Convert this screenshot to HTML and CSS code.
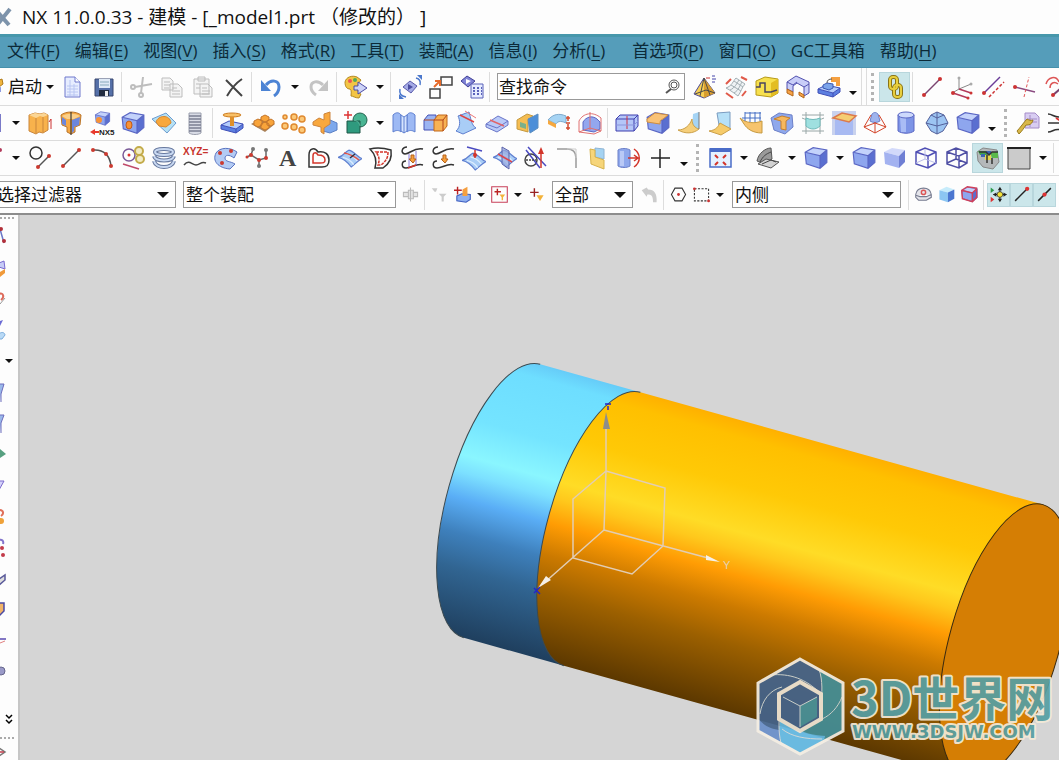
FILE: index.html
```
<!DOCTYPE html>
<html lang="zh-CN">
<head>
	<meta charset="UTF-8">
	<title>NX 11.0.0.33 - 建模</title>
	<link rel="stylesheet" href="styles.css">
</head>
<body>
	<!-- 公用图形 -->
	<svg class="defs" width="0" height="0">
		<symbol id="cube" viewBox="1 2 21 20">
			<path fill="#c3d2fb" d="M2 7 9 3l12 2-6 5z"/>
			<path fill="#8ea6ee" d="M2 7l13 3v11L3 17z"/>
			<path fill="#5a6fd0" d="M15 10l6-5v11l-6 5z"/>
			<path stroke="#5a66c4" d="M2 7 9 3l12 2v11l-6 5L3 17zl13 3v11M15 10l6-5"/>
		</symbol>
		<symbol id="slab" viewBox="0 0 24 24">
			<path fill="#b5cdfb" d="M1 14l8-4 14 3-7 5z"/>
			<path fill="#5c7fe0" d="M1 14l15 4v4L1 18zM16 18l7-5v4l-7 5z"/>
			<path stroke="#3f4fb8" d="M1 14l8-4 14 3v4l-7 5-15-4zl15 4v4M16 18l7-5"/>
		</symbol>
		<symbol id="sheet" viewBox="2 3 20 17">
			<path fill="#a9cdf6" stroke="#5f7fd0" d="M2 11c5-1 6-5 9-6 5 1 7 6 11 7-4 2-6 5-9 7-3-4-6-7-11-8z"/>
			<path stroke="#dfeeff" d="M6 11c4 1 7 3 9 6M9 8c4 1 7 3 9 6"/>
		</symbol>
		<symbol id="gear" viewBox="0 0 24 24">
			<path fill="#d9b84a" stroke="#9a7c1e" d="M5 19c3-3 7-9 10-12 2 1 4 2 6 1-1 5-5 5-7 5-2 3-4 6-7 9z"/>
		</symbol>
	</svg>

	<header class="title">
		<svg class="logoX" viewBox="0 0 12 20"><path stroke="#7d93ab" stroke-width="4" d="M-5 2 9 18M10 2-3 18"/></svg>
		<h1>NX 11.0.0.33 - 建模 - [_model1.prt （修改的） ]</h1>
	</header>

	<nav class="menu">
		<a href="#">文件(<u>F</u>)</a>
		<a href="#">编辑(<u>E</u>)</a>
		<a href="#">视图(<u>V</u>)</a>
		<a href="#">插入(<u>S</u>)</a>
		<a href="#">格式(<u>R</u>)</a>
		<a href="#">工具(<u>T</u>)</a>
		<a href="#">装配(<u>A</u>)</a>
		<a href="#">信息(<u>I</u>)</a>
		<a href="#" class="wide">分析(<u>L</u>)</a>
		<a href="#">首选项(<u>P</u>)</a>
		<a href="#">窗口(<u>O</u>)</a>
		<a href="#">GC工具箱</a>
		<a href="#">帮助(<u>H</u>)</a>
	</nav>

	<section class="bars">
		<!-- 标准 -->
		<div class="bar">
			<button class="start"><svg viewBox="0 0 6 24"><path fill="#f0b43c" stroke="#b07a18" d="M-3 6l5-2 1 5-4 3z"/><path fill="#8d9be0" d="M-3 13l4-1v5h-4z"/></svg><span>启动</span></button>
			<button class="tool" title="新建"><svg viewBox="0 0 24 24"><path fill="#e7edff" stroke="#6f78cc" d="M4 2h10l5 5v15H4z"/><path fill="#fff" stroke="#6f78cc" d="M14 2v5h5"/><path stroke="#b9c6f2" d="M6 11h11M6 14h11M6 17h11M6 20h11M9 5v16M13 9v12"/></svg></button>
			<button class="tool" title="保存"><svg viewBox="0 0 24 24"><path fill="#5570a8" stroke="#39466e" d="M3 4h18v17H3z"/><path fill="#dfeaf6" d="M7 4h11v9H7z"/><path stroke="#8ab" d="M8 7h9M8 10h9"/><path fill="#222c40" d="M7 15h10v6H7z"/><path fill="#eee" d="M13 16h3v5h-3z"/></svg></button>
			<i class="sep"></i>
			<button class="tool" title="剪切" disabled><svg viewBox="0 0 24 24"><g stroke="#bdbdbd" stroke-width="2"><circle cx="4" cy="12" r="2"/><circle cx="12" cy="20" r="2"/><path d="M6 12l17-3M12 18l2-16"/></g></svg></button>
			<button class="tool" title="复制" disabled><svg viewBox="0 0 24 24"><g fill="#f4f4f4" stroke="#bdbdbd"><path d="M2 3h8l3 3v9H2zM10 9h8l4 4v9H10z"/><path d="M4 7h6M4 10h6M4 13h5M12 13h5M12 16h8M12 19h8"/></g></svg></button>
			<button class="tool" title="粘贴" disabled><svg viewBox="0 0 24 24"><g fill="#f4f4f4" stroke="#bdbdbd"><path d="M3 4h15v15H3zM7 2h7v4H7zM9 9h8l4 4v9H9z"/><path d="M5 9h4M5 13h4M11 13h5M11 16h8M11 19h8"/></g></svg></button>
			<button class="tool" title="删除"><svg viewBox="0 0 24 24"><path stroke="#444" stroke-width="2" d="M4 5l16 16M20 4C14 8 9 14 5 21"/></svg></button>
			<i class="sep"></i>
			<button class="tool" title="撤销"><svg viewBox="0 0 24 24"><path stroke="#4c83d4" stroke-width="3" d="M7 10c5-6 13-5 13 2 0 4-2 7-5 9"/><path fill="#4c83d4" d="M2 5v11h10z"/></svg></button>
			<button class="drop" aria-label="撤销列表"></button>
			<button class="tool" title="重做" disabled><svg viewBox="0 0 24 24"><path stroke="#c4c4c4" stroke-width="3" d="M16 10C11 5 4 6 4 12c0 4 2 6 5 8"/><path fill="#c4c4c4" d="M21 5v11H11z"/></svg></button>
			<i class="sep"></i>
			<button class="tool" title="命令查找器"><svg viewBox="0 0 24 24"><path fill="#f3c545" stroke="#b58a22" d="M1 7C2 2 8 0 13 2l4 3-3 4 1 5c-2 2-1 4 2 5l-2 4c-4 0-6-2-8-2 0-3 1-5-1-7-3 0-5-2-5-7z"/><circle fill="#e55" cx="6" cy="6" r="2"/><circle fill="#5a5" cx="11" cy="5" r="2"/><path fill="#cdd3f7" stroke="#4c4ca4" d="M10 11h4V7l9 6-9 6v-4h-4z"/></svg></button>
			<button class="drop" aria-label="更多命令"></button>
			<i class="sep"></i>
			<button class="tool" title="旋转"><svg viewBox="0 0 24 24"><path fill="#a5abe6" stroke="#5a5cac" d="M5 12l7-6 7 5-6 7z"/><path fill="#4a4ca0" d="M10 9l5 3-5 3z"/><path stroke="#4b78cc" stroke-width="1.5" d="M2 14c-1 5 1 7 6 8M22 10c1-4 0-6-4-7"/><path fill="#4b78cc" d="M19 0h5v5zM1 24v-5l5 5z"/></svg></button>
			<button class="tool" title="移动"><svg viewBox="0 0 24 24"><path stroke="#444" stroke-width="1.5" d="M12 2h11v8H12zM1 14h10v9H1z"/><path stroke="#e66a2a" stroke-width="2" d="M5 12l5-5M6 6h5v5"/></svg></button>
			<button class="tool" title="对话框"><svg viewBox="0 0 24 24"><path fill="#8084d6" stroke="#3f3f96" d="M1 6l6-5 8 5-7 6z"/><path fill="#fff" d="M6 4l5 2-5 3z"/><path fill="#e6ecff" stroke="#5a62ba" d="M11 9h12v14H11z"/><path stroke="#5a62ba" stroke-width="2" stroke-dasharray="2 2" d="M13 13h9M13 16h9M13 19h9"/></svg></button>
			<i class="sep"></i>
			<label class="search">
				<input type="text" value="查找命令" aria-label="查找命令">
				<svg viewBox="0 0 16 16"><circle cx="10" cy="6" r="5"/><circle cx="10" cy="6" r="3"/><path stroke-width="2" d="M7 10l-5 4"/></svg>
			</label>
			<button class="tool" title="基准"><svg viewBox="0 0 24 24"><path fill="#f6cf55" stroke="#4b4b9b" d="M11 3 1 19l10 4 11-5z"/><path fill="#d89e30" d="M11 3v20l11-5z"/><path stroke="#4b4b4b" d="M11 3l-4 18M11 3l6 17M2 19l11-4 9 3"/><path stroke="#c33" d="M13 3h4"/><path stroke="#44a" d="M19 1h3M19 4h4M19 7h3"/></svg></button>
			<button class="tool" title="曲面网格"><svg viewBox="0 0 24 24"><path fill="#eef2f4" stroke="#a3afb4" d="M2 13C8 11 9 6 12 3l9 6c-3 3-4 8-7 12-4-3-8-6-12-8z"/><path stroke="#a3afb4" d="M6 15c5-2 7-7 9-10M10 18c5-3 6-8 8-11M7 10l10 6M10 6l9 6"/><path stroke="#e05a4a" stroke-width="2" d="M2 9l5-5M17 2l6 3M2 18l7 5M18 21l4-5"/></svg></button>
			<button class="tool" title="截面"><svg viewBox="0 0 24 24"><path fill="#f7e04e" stroke="#b79a18" d="M1 6l9-4 13 2v14l-7 4-15-2z"/><path fill="#e3bd22" d="M16 8l7-4v14l-7 4z"/><path stroke="#4a4460" stroke-width="1.5" d="M1 12h4V8h5v9h6l6-2"/></svg></button>
			<button class="tool" title="管道"><svg viewBox="0 0 24 24"><path fill="#c9cef8" stroke="#5252b0" d="M1 14V7l9-6 13 6v11l-5 3v-9l-7-4-4 3v6z"/><path stroke="#5252b0" d="M1 7l6 3 4-3M18 12l5-3"/><path fill="#f7a346" stroke="#b3661a" d="M1 14l6 3v4l-6-3zM13 17l5 3v3l-5-3z"/></svg></button>
			<button class="tool" title="装配"><svg viewBox="0 0 24 24"><use href="#slab"/><path fill="#7ba4ea" stroke="#3a58b4" d="M6 10l4-2 6 1v4l-4 2-6-2z"/><path fill="#f5a040" d="M14 2h9v9h-4V7h-5z"/><path stroke="#555" d="M10 8c0-3 2-4 5-4"/></svg></button>
			<button class="drop low" aria-label="工具栏选项"></button>
			<i class="edge"></i>
			<i class="grip"></i>
			<button class="tool on" title="链接"><svg viewBox="0 0 24 24"><g stroke="#8a7416" stroke-width="4"><rect x="7" y="2" width="7" height="12" rx="3"/><rect x="11" y="10" width="7" height="12" rx="3"/></g><g stroke="#e8cf3e" stroke-width="2"><rect x="7" y="2" width="7" height="12" rx="3"/><rect x="11" y="10" width="7" height="12" rx="3"/></g></svg></button>
			<i class="sep"></i>
			<button class="tool" title="直线"><svg viewBox="0 0 24 24"><path stroke="#7a4470" stroke-width="1.5" d="M4 20 20 4"/><circle fill="#c33" cx="4" cy="20" r="2"/><circle fill="#c33" cx="20" cy="4" r="2"/></svg></button>
			<button class="tool" title="坐标"><svg viewBox="0 0 24 24"><path stroke="#888" d="M8 14V3M8 14l12-5M8 14l-5 3"/><circle fill="#aaa" cx="8" cy="3" r="1.5"/><circle fill="#aaa" cx="20" cy="9" r="1.5"/><path stroke="#b23a5a" stroke-width="1.5" d="M2 18l15 5M8 14l12 4"/><g fill="#c33"><circle cx="2" cy="18" r="2"/><circle cx="17" cy="23" r="1.5"/><circle cx="20" cy="18" r="1.5"/></g></svg></button>
			<button class="tool" title="平行"><svg viewBox="0 0 24 24"><path stroke="#6a3c98" stroke-width="1.5" d="M2 18 18 2"/><path stroke="#c33" stroke-width="1.5" stroke-dasharray="3 2" d="M7 22 22 7"/><circle fill="#c33" cx="2" cy="18" r="2"/></svg></button>
			<button class="tool" title="垂直"><svg viewBox="0 0 24 24"><path stroke="#8a4a80" stroke-width="1.5" d="M2 12l20 5"/><path stroke="#e05555" stroke-dasharray="3 2" d="M11 22l5-20"/><circle fill="#c33" cx="2" cy="12" r="2"/></svg></button>
			<button class="tool" title="相切"><svg viewBox="0 0 24 24"><path stroke="#d55" stroke-width="1.5" d="M2 9c2-7 10-9 13-2M6 13c0-5 4-7 8-4"/><path stroke="#7a4470" stroke-width="2" d="M9 20l7-6"/><circle fill="#c33" cx="9" cy="20" r="2"/></svg></button>
		</div>

		<!-- 特征 -->
		<div class="bar">
			<button class="cut" title="草图"><svg viewBox="0 0 7 24"><path fill="#7a7ac8" d="M0 3h1v18H0z"/></svg></button>
			<button class="drop" aria-label="草图列表"></button>
			<button class="tool" title="拉伸"><svg viewBox="0 0 24 24"><path fill="#f8b24c" stroke="#c9863c" d="M1 4l6-2 5 1 4-1 4 2v15l-5 3-4-1-3 2-7-3z"/><path fill="#fbd695" d="M1 4l6-2 5 1 4-1 4 2-5 2-3-1-4 2z"/><path stroke="#c9863c" d="M8 7v15M15 6v15"/><path stroke="#c33" d="M23 18V8M21 11l2-3"/></svg></button>
			<button class="tool" title="旋转特征"><svg viewBox="0 0 24 24"><path fill="#f6a944" stroke="#b9742a" d="M2 4c5-4 15-4 20 0l-1 10-5 2v5l-4 2-4-2v-5l-5-2z"/><path fill="#fbd08a" d="M3 5c5-3 13-3 18 0l-6 3H8z"/><path fill="#6b86dc" d="M13 9l8-3-1 8-5 2v4l-2 2zM3 6l4 3v6l-4-2z"/><path stroke="#222" d="M12 1v23"/></svg></button>
			<button class="tool" title="NX5 成形"><svg viewBox="0 0 24 24"><use href="#cube" x="4" y="0" width="17" height="15"/><circle fill="#f79236" cx="9" cy="9" r="3"/><path stroke="#e8392c" stroke-width="2" d="M3 21h6"/><path fill="#e8392c" d="M5 18v6l-5-3z"/><text x="9" y="24" class="mini">NX5</text></svg></button>
			<button class="tool" title="孔"><svg viewBox="0 0 24 24"><use href="#cube"/><ellipse fill="#f79236" stroke="#c35a16" cx="8" cy="14" rx="3" ry="4"/></svg></button>
			<button class="tool" title="凸台"><svg viewBox="0 0 24 24"><path fill="#b6e1f4" stroke="#6c9cd0" d="M0 8l14-6 10 10-9 10z"/><path fill="#f8a83c" stroke="#d9862c" d="M4 11c2-7 14-8 15 1l-5 4-7-1z"/></svg></button>
			<button class="tool" title="螺纹"><svg viewBox="0 0 24 24"><path fill="#d9dce6" stroke="#9a9eac" d="M6 2h12v20c-3 2-9 2-12 0z"/><path stroke="#7b7f92" stroke-width="1.5" d="M6 5h12M6 8h12M6 11h12M6 14h12M6 17h12M6 20h12"/></svg></button>
			<i class="sep"></i>
			<button class="tool" title="拔模"><svg viewBox="0 0 24 24"><use href="#slab"/><ellipse fill="#f9c066" stroke="#cd7c22" cx="12" cy="4" rx="9" ry="2"/><path stroke="#e0902a" stroke-width="4" d="M12 6v9"/></svg></button>
			<button class="tool" title="阵列特征"><svg viewBox="0 0 24 24"><path fill="#a8845e" d="M0 13l11-6 13 6-10 8z"/><g fill="#f8a43a" stroke="#c5762a"><path d="M3 10l4-2 4 2v4l-4 2-4-2zM10 13l4-2 4 2v4l-4 2-4-2zM10 6l4-2 4 2v3l-4 2-4-2zM16 10l4-2 3 2v3l-3 2-4-1z"/></g></svg></button>
			<button class="tool" title="阵列几何"><svg viewBox="0 0 24 24"><g fill="#fbc878" stroke="#e08a30" stroke-width="1.5"><circle cx="3" cy="6" r="2"/><circle cx="12" cy="6" r="3"/><circle cx="20" cy="8" r="3"/><circle cx="3" cy="15" r="3"/><circle cx="12" cy="16" r="3"/><circle cx="20" cy="19" r="3"/></g></svg></button>
			<button class="tool" title="镜像"><svg viewBox="0 0 24 24"><path fill="#7da8ec" stroke="#5a7fc4" d="M10 12l7-3 7 3v7l-7 3-7-2z"/><path fill="#f8a83e" stroke="#cd843c" d="M0 11l6-4 5 2V3l6-2v12l-6 4v6l-3-2v-5l-8-2z"/></svg></button>
			<button class="tool" title="合并"><svg viewBox="0 0 24 24"><circle fill="#4ab593" stroke="#23624f" cx="16" cy="9" r="7"/><path fill="#2f9a7e" stroke="#1f5647" d="M3 10h13v12H3z"/><path stroke="#5dbb9f" d="M10 10c1-2 6 2 6 5"/><path stroke="#d33" stroke-width="1.5" d="M4 0v8M0 4h8"/></svg></button>
			<button class="drop" aria-label="布尔列表"></button>
			<button class="tool" title="桥接"><svg viewBox="0 0 24 24"><path fill="#9db9f4" stroke="#6080d0" d="M1 4c3-3 6-3 8 0v17c-2-2-5-2-8 0zM15 4c2-3 5-3 8 0v17c-3-2-6-2-8 0z"/><path fill="#d5e4ff" stroke="#6080d0" d="M9 4l3 2 3-2v16l-3 2-3-2zM12 6v16"/></svg></button>
			<button class="tool" title="替换面"><svg viewBox="0 0 24 24"><path fill="#9bb4f2" stroke="#4450b4" d="M1 9l4-5h8v15H1z"/><path fill="#f8b254" stroke="#c2681a" d="M11 9l4-5h9v11l-4 5h-9z"/><path stroke="#b3451a" d="M1 9h19v11M20 9l4-5"/></svg></button>
			<button class="tool" title="修剪体"><svg viewBox="0 0 24 24"><path fill="#a9cdf6" stroke="#5f7fd0" d="M2 20c5-4 4-11 2-15l11-4c2 6 2 13 7 16L9 23z"/><path stroke="#d44" stroke-width="1.5" d="M6 4l14 7"/><path stroke="#e77" d="M11 0l11 7"/></svg></button>
			<button class="tool" title="拆分体"><svg viewBox="0 0 24 24"><path fill="#b9caf8" stroke="#6a75c8" d="M1 13l12-8 10 5v4l-11 7-11-5z"/><path stroke="#6a75c8" d="M1 13l11 4 11-7"/><path stroke="#e0656a" stroke-width="1.5" d="M5 9l14 6"/></svg></button>
			<button class="tool" title="抽壳"><svg viewBox="0 0 24 24"><path fill="#f5bd52" stroke="#c59a40" d="M1 9l10-6 6 2-5 4v12L1 18z"/><path fill="#4d8fd8" stroke="#5c8ec0" d="M12 8l10-5v14l-8 5z"/><path fill="#7ab08a" d="M4 11l6 2v5l-6-2z"/></svg></button>
			<button class="tool" title="加厚"><svg viewBox="0 0 24 24"><path fill="#a6d4f4" stroke="#7faacc" d="M1 9c5-6 11-7 18-4v7c-6-3-9-1-10 1z"/><path fill="#f6a83e" d="M1 9l8 4v4l-8-4z"/><path stroke="#d44a2c" stroke-width="1.5" d="M21 5v5M21 13v6M19 7h4M19 12h4M19 17h4"/></svg></button>
			<button class="tool" title="偏置"><svg viewBox="0 0 24 24"><path fill="#93a7ee" stroke="#5c68c4" d="M5 11c3-5 9-7 14-3l3 3v7l-6 3-11-2z"/><path stroke="#e07070" d="M1 10c4-8 14-10 22-3v13l-7 3-15-2zM12 1v18M1 21l11-4 11 3"/></svg></button>
			<i class="sep"></i>
			<button class="tool" title="块"><svg viewBox="0 0 24 24"><path fill="#b4c6f8" stroke="#3f3fae" d="M1 8l4-4h18v11l-4 5H1zM1 8h18v12M19 8l4-4"/><path stroke="#c34" d="M12 5v13"/><path stroke="#8a94dd" d="M1 14h18l4-4"/></svg></button>
			<button class="tool" title="边倒圆"><svg viewBox="0 0 24 24"><use href="#cube"/><path fill="#f9c276" stroke="#cf8e3e" d="M1 8 9 2l13 2-5 4c-3 1-3 3-3 5L1 11z"/></svg></button>
			<button class="tool" title="直纹"><svg viewBox="0 0 24 24"><path fill="#a5d4f5" d="M16 3l6-2v17l-7 2z"/><path fill="#f6cf7a" stroke="#cba04a" d="M1 19c7 0 12-5 14-11 0 6 3 9 7 10-6 5-14 5-21 1z"/><path stroke="#777" d="M22 1v17"/></svg></button>
			<button class="tool" title="扫掠"><svg viewBox="0 0 24 24"><path fill="#b6e0f7" stroke="#7a9cc0" d="M9 2l13-1v17l-11-4z"/><path fill="#f6cb6a" stroke="#cba04a" d="M1 20c8-1 9-5 11-8l11 6-10 6z"/></svg></button>
			<button class="tool" title="延伸"><svg viewBox="0 0 24 24"><path fill="#f7c46e" stroke="#c59a40" d="M1 7c6 5 14 6 22 3v12c-9 0-15-4-18-9z"/><path stroke="#456fc4" d="M3 7h19M6 1v9M11 1v10M16 1v10M21 1v9M6 2h16"/></svg></button>
			<button class="tool" title="规律延伸"><svg viewBox="0 0 24 24"><path fill="#8fa8ec" stroke="#6c80c8" d="M1 7l8-5 13 2 1 12-8 7-11-4z"/><path fill="#f6b85e" stroke="#c5802c" d="M4 8l8-3 8 2-4 3v9l-5-1v-8z"/></svg></button>
			<button class="tool" title="通过曲线网格"><svg viewBox="0 0 24 24"><path stroke="#98a6a6" d="M1 4h22M1 20h22M1 7c6 3 16 3 22 0M5 1v22M19 1v22"/><path fill="#9fe0e0" stroke="#6fbaba" d="M5 7c5 2 9 2 14 0v8c-4 4-10 4-14 0z"/></svg></button>
			<button class="tool" title="N 边曲面"><svg viewBox="0 0 24 24"><path fill="#c9d2ee" d="M0 0h24v24H0z"/><path fill="#a8baf2" d="M3 9h18v15H3z"/><path fill="#f5cd72" stroke="#dc7a4c" stroke-width="1.5" d="M1 7l9-5 14 3-7 6z"/></svg></button>
			<button class="tool" title="圆锥"><svg viewBox="0 0 24 24"><path fill="#9fb4ee" stroke="#6c80c8" d="M7 10l2-7c2-2 4-2 6 0l2 7c-3 2-7 2-10 0z"/><path stroke="#d3452a" stroke-width="1" d="M8 4 1 16l11 6 11-6-7-12M12 11v11M1 16l11-4 11 4"/></svg></button>
			<button class="tool" title="圆柱"><svg viewBox="0 0 24 24"><path fill="#7d94e6" stroke="#5c68c4" d="M4 4v16c4 3 12 3 16 0V4z"/><path fill="#a9bcf5" d="M6 6h6v15H7z"/><ellipse fill="#cdd9fc" stroke="#5c68c4" cx="12" cy="4" rx="8" ry="3"/></svg></button>
			<button class="tool" title="球"><svg viewBox="0 0 24 24"><path fill="#9cc4f2" stroke="#54609a" d="M1 12 6 4l6-3 7 3 4 8-5 8-6 3-6-3z"/><path stroke="#54609a" d="M1 12l11 3 11-3M12 1v22M6 4l6 3 7-3"/></svg></button>
			<button class="tool" title="长方体"><svg viewBox="0 0 24 24"><use href="#cube"/></svg></button>
			<button class="drop low" aria-label="工具栏选项"></button>
			<i class="grip"></i>
			<button class="tool" title="定制"><svg viewBox="0 0 24 24"><path fill="#d8cdf2" stroke="#a58cc8" d="M9 2h10l4 4v11H9z"/><path stroke="#a58cc8" d="M11 8h10M11 11h10M14 4v12"/><use href="#gear" x="-4" y="1"/></svg></button>
			<button class="tool" title="曲线"><svg viewBox="0 0 24 24"><path stroke="#333" stroke-width="1.5" d="M1 3c5 0 6 4 13 3M1 12h13M1 21c5 0 6-4 13-2"/><path stroke="#d33" stroke-width="2" d="M9 7l5 3"/></svg></button>
		</div>

		<!-- 曲线 -->
		<div class="bar">
			<button class="cut" title="点"><svg viewBox="0 0 7 24"><circle fill="#b23a5a" cx="0" cy="4" r="2"/></svg></button>
			<button class="drop" aria-label="点列表"></button>
			<button class="tool" title="直线和圆弧"><svg viewBox="0 0 24 24"><circle stroke="#333" stroke-width="1.5" cx="8" cy="7" r="6"/><path stroke="#555" stroke-width="1.5" d="M10 21 21 10"/><circle fill="#cc3a30" cx="10" cy="21" r="2"/><circle fill="#cc3a30" cx="21" cy="10" r="2"/></svg></button>
			<button class="tool" title="直线"><svg viewBox="0 0 24 24"><path stroke="#555" stroke-width="1.5" d="M4 20 20 4"/><circle fill="#cc3a30" cx="4" cy="20" r="2"/><circle fill="#cc3a30" cx="20" cy="4" r="2"/></svg></button>
			<button class="tool" title="圆弧"><svg viewBox="0 0 24 24"><path stroke="#555" stroke-width="1.5" d="M3 4c11-1 17 6 18 16"/><circle fill="#cc3a30" cx="3" cy="4" r="2"/><circle fill="#cc3a30" cx="16" cy="8" r="2"/><circle fill="#cc3a30" cx="21" cy="20" r="2"/></svg></button>
			<button class="tool" title="基本曲线"><svg viewBox="0 0 24 24"><circle stroke="#7a5a98" stroke-width="1.5" cx="8" cy="9" r="6"/><circle fill="#d33" cx="8" cy="9" r="1.5"/><g fill="#f3ecc4" stroke="#c3ab4a" stroke-width="2"><circle cx="18" cy="5" r="4"/><circle cx="19" cy="13" r="4"/></g><path stroke="#c04a6a" stroke-width="1.5" d="M2 18l16 5"/></svg></button>
			<button class="tool" title="螺旋线"><svg viewBox="0 0 24 24"><g stroke="#66789e" stroke-width="4"><ellipse cx="12" cy="6" rx="9" ry="3"/><path d="M2 10c2 6 18 6 20 0M2 15c2 8 18 8 20 0"/></g><g stroke="#c9d9f2" stroke-width="2"><ellipse cx="12" cy="6" rx="9" ry="3"/><path d="M2 10c2 6 18 6 20 0M2 15c2 8 18 8 20 0"/></g></svg></button>
			<button class="tool" title="规律曲线"><svg viewBox="0 0 24 24"><text x="0" y="9" class="mini red">XYZ=</text><path stroke="#444" stroke-width="1.5" d="M1 19c5-6 8 0 12 0s5-4 10-2"/></svg></button>
			<button class="tool" title="艺术样条"><svg viewBox="0 0 24 24"><path fill="#b3cbf4" stroke="#5a74c0" d="M2 7c4-6 14-6 21-1l-3 6c-5-4-9-3-9 0 0 4 5 3 10 6l-5 5C4 22-2 15 2 7z"/><g fill="#cc3a30"><circle cx="6" cy="7" r="2"/><circle cx="17" cy="5" r="2"/><circle cx="8" cy="17" r="2"/></g></svg></button>
			<button class="tool" title="拟合样条"><svg viewBox="0 0 24 24"><path stroke="#666" stroke-width="1.5" d="M8 3 6 9l8 5 7-2V4M6 9l-4 2M14 14v6"/><g fill="#777"><circle cx="8" cy="3" r="2"/><circle cx="21" cy="4" r="2"/><circle cx="14" cy="20" r="2"/></g><g fill="#cc3a30"><circle cx="6" cy="9" r="2"/><circle cx="14" cy="14" r="2"/><circle cx="21" cy="12" r="2"/><circle cx="2" cy="11" r="1.5"/></g></svg></button>
			<button class="tool" title="文本"><svg viewBox="0 0 24 24"><text x="3" y="20" class="letter">A</text></svg></button>
			<button class="tool" title="偏置曲线"><svg viewBox="0 0 24 24"><path stroke="#333" stroke-width="1.5" d="M2 21V9C2 2 8 1 11 6c7-1 11 2 11 8s-3 7-7 7z"/><path stroke="#d3352a" stroke-width="1.5" d="M6 17v-7c0-4 3-4 5-1 4 0 7 1 7 5 0 3-2 3-5 3z"/></svg></button>
			<button class="tool" title="面上偏置"><svg viewBox="0 0 24 24"><use href="#sheet"/><path stroke="#e0554a" stroke-width="1.5" d="M6 7c6 1 11 4 15 7"/><path stroke="#334" stroke-width="1.5" d="M12 12l5-4"/></svg></button>
			<button class="tool" title="缠绕曲线"><svg viewBox="0 0 24 24"><path stroke="#333" stroke-width="1.5" d="M1 3c8-2 14-1 21 1 1 8-1 13-8 18H6C8 15 6 8 1 3z"/><path stroke="#d3352a" stroke-width="1.5" stroke-dasharray="3 1" d="M7 6h12c0 6-2 9-7 13H9c2-5 1-9-2-13z"/></svg></button>
			<button class="tool" title="组合投影"><svg viewBox="0 0 24 24"><path stroke="#333" stroke-width="1.5" d="M7 1C2 1 0 7 5 8c5 0 9-7 18-5M6 15c-5 0-5 7 0 7 6 0 10-5 17-3"/><path stroke="#8a7ad8" d="M9 8v13M16 5v14"/><path fill="#f7a03a" stroke="#b5601a" d="M11 9h3v4h2l-3 4-4-4h2z"/><path stroke="#d3352a" stroke-width="1.5" d="M8 22l8-3"/></svg></button>
			<button class="tool" title="投影曲线"><svg viewBox="0 0 24 24"><path stroke="#333" stroke-width="1.5" d="M7 1C2 1 0 7 5 8c5 0 9-7 18-5M6 15c-5 0-5 7 0 7 6 0 10-5 17-3"/><path fill="#f7a03a" stroke="#b5601a" d="M12 9h3v4h2l-3 4-4-4h2z"/></svg></button>
			<button class="tool" title="投影到面"><svg viewBox="0 0 24 24"><use href="#sheet" y="3"/><path stroke="#4a4ac0" stroke-width="1.5" d="M5 1l15 4"/><path stroke="#d3352a" stroke-width="1.5" d="M13 4v8"/><circle fill="#d3352a" cx="13" cy="9" r="2"/></svg></button>
			<button class="tool" title="相交曲线"><svg viewBox="0 0 24 24"><use href="#sheet"/><path fill="#9aaade" fill-opacity=".7" stroke="#5a62aa" d="M9 1l7 4v18l-7-5z"/><path stroke="#e0454a" stroke-width="1.5" d="M5 8l14 8"/></svg></button>
			<button class="tool" title="截面曲线"><svg viewBox="0 0 24 24"><circle stroke="#444" stroke-width="1.5" cx="7" cy="14" r="6"/><path stroke="#4a4ac0" stroke-width="1.5" d="M4 1l18 19M2 4l14 18"/><path stroke="#444" stroke-width="1.5" stroke-dasharray="2 1" d="M2 14h10"/><path stroke="#d3352a" stroke-width="1.5" d="M17 22V5"/><path fill="#d3352a" d="M14 8l3-7 3 7z"/></svg></button>
			<button class="tool" title="圆形圆角曲线"><svg viewBox="0 0 24 24"><path stroke="#999" stroke-width="1.5" d="M2 3h10c6 0 9 3 9 9v10"/><path stroke="#ccc" d="M12 3h9v9"/></svg></button>
			<button class="tool" title="抽取曲线"><svg viewBox="0 0 24 24"><path fill="#a5d3f2" stroke="#8eb4d4" d="M9 2l9 1v10l-9-2z"/><path fill="#f6d57a" stroke="#d7b24c" d="M4 3l5 1v7l9 3v9L5 18z"/></svg></button>
			<button class="tool" title="移动曲线"><svg viewBox="0 0 24 24"><path fill="#8fa8ec" stroke="#6c80c8" d="M1 4c3-2 9-2 12 0v16c-3 2-9 2-12 0z"/><path fill="#b9c9f6" d="M3 5h4v15H3z"/><path stroke="#d3352a" stroke-width="1.5" d="M17 3c7 5 7 13 0 18M11 12h9M17 9l4 3-4 3"/></svg></button>
			<button class="tool" title="点集"><svg viewBox="0 0 24 24"><path stroke="#222" stroke-width="1.5" d="M12 3v19M3 12h19"/></svg></button>
			<button class="drop low" aria-label="工具栏选项"></button>
			<i class="grip"></i>
			<button class="tool" title="适合窗口"><svg viewBox="0 0 24 24"><path fill="#e6f2ff" stroke="#4a6cc8" stroke-width="1.5" d="M2 3h21v18H2z"/><path fill="#4a6cc8" d="M2 2h21v4H2z"/><path stroke="#d3352a" stroke-width="2" d="M7 9l3 3M18 9l-3 3M7 19l3-3M18 19l-3-3"/></svg></button>
			<button class="drop" aria-label="窗口列表"></button>
			<button class="tool" title="图层"><svg viewBox="0 0 24 24"><path fill="#9a9a9a" stroke="#555" d="M1 15C2 8 9 2 15 2l1 11-8 5z"/><path fill="#d2d2d2" stroke="#555" d="M2 18l8-5 13 3-8 6z"/><path stroke="#444" d="M4 16c3-6 6-8 11-10M6 18l9-4 5 2"/></svg></button>
			<button class="drop" aria-label="图层列表"></button>
			<button class="tool" title="着色"><svg viewBox="0 0 24 24"><use href="#cube"/></svg></button>
			<button class="drop" aria-label="着色列表"></button>
			<button class="tool" title="带边着色"><svg viewBox="0 0 24 24"><use href="#cube"/></svg></button>
			<button class="tool" title="无边着色"><svg viewBox="0 0 24 24"><path fill="#d2d9fa" d="M1 6 9 2l13 2-6 6z"/><path fill="#a3b2f0" d="M1 6l15 4v12L2 18z"/><path fill="#6f7fd4" d="M16 10l6-6v12l-6 6z"/></svg></button>
			<button class="tool" title="隐藏线"><svg viewBox="0 0 24 24"><path stroke="#4f4fb4" stroke-width="1.5" d="M2 6l9-4 11 4v11l-8 5-12-4zl12 4v12M14 10l8-4"/><path stroke="#bbbde8" d="M11 3v10l-9 4M11 13l11 4"/></svg></button>
			<button class="tool" title="线框"><svg viewBox="0 0 24 24"><path stroke="#4f4fa4" stroke-width="1.5" d="M2 6l9-4 11 4v11l-8 5-12-4zl12 4v12M14 10l8-4M11 2v11l-9 4M11 13l11 4"/></svg></button>
			<button class="tool on" title="真实着色"><svg viewBox="0 0 24 24"><path fill="#b4b8ba" stroke="#888" d="M1 6l6-4 14 2 2 12-6 7-10-2-5-6z"/><path fill="#3fa64a" d="M2 5h8l2 4H4z"/><path fill="#e4d64a" d="M9 9h6v5H9z"/><path fill="#5ab84a" d="M14 6h8v6h-6z"/><path fill="#3a64b4" d="M5 8h4v3H5zM10 5h5v3h-5z"/><path stroke="#333" stroke-width="1.5" d="M3 6h7l3 3 3-3h6M11 9v8M16 12v6"/></svg></button>
			<button class="tool" title="背景"><svg viewBox="0 0 24 24"><path fill="#cbcbcb" stroke="#444" d="M1 2h22v21H1z"/><path stroke="#222" stroke-width="2" d="M0 2h24"/></svg></button>
			<button class="drop" aria-label="背景列表"></button>
			<i class="sep"></i>
		</div>

		<!-- 选择 -->
		<div class="bar pick">
			<span class="combo filter"><select aria-label="选择过滤器"><option>选择过滤器</option></select></span>
			<span class="combo scope"><select aria-label="选择范围"><option>整个装配</option></select></span>
			<button class="tool" title="重置" disabled><svg viewBox="0 0 24 24"><path fill="#e4e4e4" stroke="#bbb" stroke-width="1.5" d="M2 9h7V6h7v3h6v6h-6v3H9v-3H2zM9 9v6M16 9v6M12 2v20"/></svg></button>
			<i class="sep"></i>
			<button class="tool" title="过滤" disabled><svg viewBox="0 0 24 24"><path fill="#ccc" d="M1 3h8l-2 5H5zM11 11h11l-4 4v7h-3v-7z"/></svg></button>
			<button class="tool" title="常规选择"><svg viewBox="0 0 24 24"><path fill="#8fb0f0" stroke="#3f5fc0" stroke-width="1.5" d="M4 14l7-3 12 1v7l-6 4-13-2z"/><path fill="#f5a040" d="M12 5l7-4v13h-7z"/><path stroke="#b22" stroke-width="2" d="M5 1v11M0 6h11"/></svg></button>
			<button class="drop" aria-label="选择列表"></button>
			<button class="tool" title="框选"><svg viewBox="0 0 24 24"><path stroke="#c8405a" stroke-width="1.5" d="M1 1h22v22H1z"/><path stroke="#b22" stroke-width="2" d="M9 4v9M5 8h9"/><path fill="#f3b23a" d="M12 12h8l-3 4v4h-2v-4z"/></svg></button>
			<button class="drop" aria-label="框选列表"></button>
			<button class="tool" title="高亮"><svg viewBox="0 0 24 24"><path stroke="#922" stroke-width="2" d="M9 3v12M3 9h12"/><path fill="#f3b23a" d="M12 13h10l-5 8z"/></svg></button>
			<span class="combo all"><select aria-label="类型"><option>全部</option></select></span>
			<button class="tool" title="恢复" disabled><svg viewBox="0 0 24 24"><path fill="#ccc" d="M1 6l7-4 2 3c9 0 13 6 12 18h-5c0-9-2-11-8-11l-1 3z"/></svg></button>
			<i class="sep"></i>
			<button class="tool" title="多边形"><svg viewBox="0 0 24 24"><path stroke="#333" stroke-width="1.5" d="M2 12 7 3h10l5 9-5 9H7z"/><circle fill="#c33" cx="12" cy="12" r="2"/></svg></button>
			<button class="tool" title="矩形"><svg viewBox="0 0 24 24"><path stroke="#333" stroke-width="1.5" stroke-dasharray="3 2" d="M2 4h20v17H2z"/><circle fill="#c33" cx="2" cy="4" r="2"/><circle fill="#c33" cx="22" cy="21" r="2"/></svg></button>
			<button class="drop" aria-label="矩形列表"></button>
			<span class="combo side"><select aria-label="侧"><option>内侧</option></select></span>
			<i class="sep"></i>
			<button class="tool" title="面"><svg viewBox="0 0 24 24"><path fill="#e4e4ea" stroke="#777c90" stroke-width="1.5" d="M1 12c1-6 5-9 11-9s10 3 11 9v4l-7 4H5l-4-4zM1 13l6 2h9l7-3"/><circle stroke="#d55" stroke-width="2" cx="12" cy="9" r="3"/></svg></button>
			<button class="tool" title="实体"><svg viewBox="0 0 24 24"><path fill="#c7ecfb" d="M2 6l10-5 11 4-9 4z"/><path fill="#8cc6f2" d="M2 6l12 3v14L2 19z"/><path fill="#4b76d0" d="M14 9l9-4v13l-9 5z"/></svg></button>
			<button class="tool" title="组件"><svg viewBox="0 0 24 24"><use href="#cube"/><path stroke="#d0405a" stroke-width="2" d="M1 6 9 1l13 2v13l-6 6-14-4zl15 4v12M16 10l6-6"/></svg></button>
			<i class="sep"></i>
			<button class="tool on" title="捕捉点"><svg viewBox="0 0 24 24"><path fill="#2c9a4a" d="M1 2l5 4-5 4z"/><path fill="#d33" d="M1 15l5 4-5 4z"/><path stroke="#222" stroke-width="1.5" d="M14 3v18M5 12h18"/><path fill="#222" d="M14 1l3 5h-6zM14 23l3-5h-6zM24 12l-5-3v6zM4 12l5-3v6z"/><circle fill="#f3e23a" stroke="#222" cx="14" cy="12" r="4"/></svg></button>
			<button class="tool on" title="端点"><svg viewBox="0 0 24 24"><path stroke="#222" stroke-width="2" d="M3 21 20 4"/><circle fill="#d33" cx="20" cy="4" r="3"/></svg></button>
			<button class="tool on" title="中点"><svg viewBox="0 0 24 24"><path stroke="#222" stroke-width="2" d="M3 21 21 3"/><circle fill="#d33" cx="12" cy="12" r="3"/></svg></button>
		</div>
	</section>

	<main class="work">
		<aside class="side">
			<i class="hgrip"></i>
			<button title="轮廓"><svg viewBox="0 0 8 24"><path stroke="#6a78c8" stroke-width="1.5" d="M0 5l4 14"/><circle fill="#b2303a" cx="1" cy="5" r="2"/><circle fill="#b2303a" cx="4" cy="17" r="2"/></svg></button>
			<button title="艺术曲面"><svg viewBox="0 0 8 24"><path fill="#c7ccf6" stroke="#7a6ad0" d="M-1 8l5-2 1 8-6-2z"/><path fill="#f09a3a" d="M0 17l5-3v4l-5 4z"/></svg></button>
			<button title="抽取"><svg viewBox="0 0 8 24"><path stroke="#dd6a5a" stroke-width="2" d="M-1 8c4-2 6 3 2 6"/><path stroke="#999" d="M0 18l5-6"/></svg></button>
			<button title="扫掠"><svg viewBox="0 0 8 24"><path fill="#6a6ad4" d="M0 4l3-1-3 6z"/><path fill="#b9daf6" stroke="#7cacdc" d="M-1 17c3-3 6-1 6 1l-3 4h-3z"/></svg></button>
			<button class="drop" aria-label="更多曲面"></button>
			<button title="草图曲线"><svg viewBox="0 0 8 24"><path fill="#9ab9ea" stroke="#6c6cbc" d="M-1 3h5L1 13v8"/></svg></button>
			<button title="修剪片体"><svg viewBox="0 0 8 24"><path fill="#9ab9ea" stroke="#6c6cbc" d="M-1 3h5L1 11v10"/></svg></button>
			<button title="缝合"><svg viewBox="0 0 8 24"><path fill="#57a080" d="M0 6l6 5-6 4z"/></svg></button>
			<button title="延伸片体"><svg viewBox="0 0 8 24"><path fill="#d5d2fa" stroke="#7a6acc" d="M-1 7h5l-5 9z"/></svg></button>
			<button title="补片"><svg viewBox="0 0 8 24"><path stroke="#e0705a" stroke-width="2" d="M-1 5c5 0 5 4 2 6"/><circle fill="#efa23a" cx="1" cy="16" r="3"/></svg></button>
			<button title="X 型"><svg viewBox="0 0 8 24"><path stroke="#8274cc" stroke-width="2" d="M-1 4c3-1 5 1 4 4"/><circle fill="#c33b4a" cx="2" cy="12" r="2"/><circle fill="#c33b4a" cx="3" cy="19" r="2"/></svg></button>
			<button title="变换"><svg viewBox="0 0 8 24"><path fill="#ddd" stroke="#5a5a9a" stroke-width="1.5" d="M-1 12l6-4v5l-6 5"/></svg></button>
			<button title="替换"><svg viewBox="0 0 8 24"><path fill="#f1b469" stroke="#4a4aa4" stroke-width="1.5" d="M-1 5h5v8l-5 5z"/></svg></button>
			<button title="光顺"><svg viewBox="0 0 8 24"><path stroke="#5a4ab0" stroke-width="1.5" d="M0 10h6"/><path stroke="#e08080" d="M0 14l5-2"/></svg></button>
			<button title="分析"><svg viewBox="0 0 8 24"><circle fill="#9a9ac8" stroke="#66668c" cx="1" cy="11" r="4"/></svg></button>
			<button class="more" aria-label="展开"><svg viewBox="0 0 10 14"><path stroke="#000" stroke-width="1.5" d="M2 2l3 3 3-3M2 7l3 3 3-3"/></svg></button>
			<i class="hgrip"></i>
			<button class="last" title="测量"><svg viewBox="0 0 8 24"><path stroke="#777" stroke-width="1.5" d="M-1 8l6 4-6 4"/><path stroke="#c33b4a" stroke-width="1.5" d="M0 12h4"/></svg></button>
		</aside>

		<!-- 模型视图 -->
		<section class="view">
			<svg viewBox="20 214 1039 546" preserveAspectRatio="xMinYMin slice">
				<defs>
					<linearGradient id="blue" x1="0" y1="0" x2="0" y2="1">
						<stop offset="0" stop-color="#66ccf8"/>
						<stop offset=".05" stop-color="#6edeff"/>
						<stop offset=".25" stop-color="#74e4ff"/>
						<stop offset=".38" stop-color="#8af6ff"/>
						<stop offset=".44" stop-color="#7ce0ff"/>
						<stop offset=".53" stop-color="#5aaef6"/>
						<stop offset=".65" stop-color="#3e80bc"/>
						<stop offset=".77" stop-color="#316592"/>
						<stop offset="1" stop-color="#1f3f5e"/>
					</linearGradient>
					<linearGradient id="gold" x1="0" y1="0" x2="0" y2="1">
						<stop offset="0" stop-color="#ffb000"/>
						<stop offset=".06" stop-color="#ffc000"/>
						<stop offset=".22" stop-color="#ffc906"/>
						<stop offset=".38" stop-color="#ffdc26"/>
						<stop offset=".44" stop-color="#ffc81c"/>
						<stop offset=".53" stop-color="#ff9c04"/>
						<stop offset=".64" stop-color="#cc7a00"/>
						<stop offset=".77" stop-color="#9c6000"/>
						<stop offset="1" stop-color="#5c3800"/>
					</linearGradient>
				</defs>
				<g transform="translate(502 500) rotate(15.6)">
					<path fill="url(#blue)" d="M0-142A55 142 0 0 0 0 142H104V-142z"/>
					<path fill="url(#gold)" d="M104-142A55 142 0 0 0 104 142H522V-142z"/>
					<path stroke="#3c4a50" d="M0-142A55 142 0 0 0 0 142M104-142A55 142 0 0 0 104 142"/>
					<ellipse fill="#d57e04" stroke="#3a2a10" cx="522" cy="0" rx="55" ry="142"/>
				</g>
				<g stroke="#e2cdb4" stroke-width="1.5">
					<path d="M604 529l2-59 59 17-2 58-31 28-59-16v-59l33-28M604 529l104 28M604 529l-60 53M606 470v-44"/>
				</g>
				<path fill="#8d8d8d" d="M606 411l4 17h-7z"/>
				<path fill="#f5f0e8" d="M720 561l-14-7v5zM538 587l8-12 5 4z"/>
				<path stroke="#2326c8" stroke-width="1.5" d="M605 403h6M608 405v4M534 587l6 6M540 586l-6 6"/>
				<text x="723" y="568" class="axis">Y</text>

				<g class="mark">
					<path fill="#44648c" d="M800 658l43 24v48l-43 23-42-23v-48z"/>
					<path fill="#438f98" d="M819 668l24 14v48l-43 23-14-18 36-22V692c0-9-1-16-3-24z"/>
					<path fill="#62b8e2" d="M781 716l19 12 22-11c-2 8 8 18 0 23l-22 13-20-11c-2-8-1-17 1-26z"/>
					<path fill="#438f98" d="M822 692v24l-22 13c10 6 26 6 34 6l9-5v-48z"/>
					<path fill="#6a8fca" d="M758 718c8 8 14 10 22 11v13l-22-12z"/>
					<path stroke="#cfd8d8" d="M819 668c4 12 3 24 2 36M770 674c20-2 36 4 50 18M760 713c2-14 10-24 22-27M781 742c-3-12-2-24-1-34M782 728c10 8 24 10 40 10M822 718c9-4 16-12 20-22"/>
					<path fill="#44648c" stroke="#f1e8d8" stroke-width="4" d="M800 681l21 12v25l-21 12-21-12v-25z"/>
					<path fill="#47929c" d="M800 705l17-9v20l-17 10z"/>
					<path stroke="#cfd8d8" d="M783 696l17 9 17-9M800 705v21"/>
					<path stroke="#f5efe4" stroke-width="3" d="M800 658l43 24v48l-43 23-42-23v-48z"/>
					<text x="851" y="715" class="brand">3D世界网</text>
					<text x="852" y="737" class="url">WWW.3DSJW.COM</text>
				</g>
			</svg>
		</section>
	</main>
</body>
</html>
```
FILE: styles.css
```
*{
	box-sizing:border-box;
}
body{
	display:flex;
	flex-direction:column;
	height:100vh;
	margin:0;
	overflow:hidden;
	background:#fdfdfd;
	color:#111;
	font:17px/24px "Open Sans","Noto Sans CJK SC",sans-serif;
}
svg{
	fill:none;
}
.defs{
	position:absolute;
}
button{
	flex:none;
	padding:0;
	border:0;
	background:none;
	color:inherit;
	font:inherit;
}
h1{
	margin:0;
	font-size:19px;
	font-weight:normal;
	line-height:34px;
	white-space:pre;
}

.title{
	display:flex;
	flex:none;
	align-items:center;
	height:34px;
}
.logoX{
	width:12px;
	height:20px;
	margin-right:10px;
}
.menu{
	display:flex;
	flex:none;
	gap:15px;
	height:34px;
	padding-left:7px;
	border-top:3px solid #4797ab;
	border-bottom:1px solid #4690ab;
	background:#559dba;
	line-height:28px;
}
.menu a{
	flex:none;
	color:#0c2a38;
	text-decoration:none;
}
.menu u{
	text-underline-offset:3px;
}
.menu .wide{
	margin-right:12px;
}

/* 工具栏 */
.bars{
	flex:none;
	border-bottom:2px solid #8c8c8c;
}
.bar{
	display:flex;
	align-items:center;
	height:35px;
	overflow:hidden;
	border-bottom:1px solid #dcdcdc;
}
.bar:first-child{
	height:38px;
}
.tool{
	width:31px;
	height:30px;
}
.tool > svg{
	display:block;
	width:24px;
	height:24px;
	margin:0 auto;
	overflow:visible;
}
.tool.on{
	background:#cbe6ea;
	box-shadow:inset 0 0 0 1px #b8d6dc;
}
.start{
	display:flex;
	align-items:center;
	width:57px;
}
.start svg{
	width:6px;
	height:24px;
	margin-right:2px;
}
.start:after, .drop:after{
	display:block;
	width:0;
	margin:0 auto;
	border:4px solid transparent;
	border-top-color:#111;
	border-bottom:0;
	content:"";
}
.drop{
	width:17px;
	height:24px;
}
.drop.low{
	padding-top:12px;
}
.cut{
	width:7px;
}
.cut svg{
	display:block;
	width:7px;
	height:24px;
}
.sep{
	flex:none;
	width:2px;
	height:30px;
	margin:0 2px;
	border-left:1px solid #ddd;
}
.edge{
	flex:none;
	align-self:stretch;
	width:6px;
	border-left:1px solid #ddd;
	border-right:1px solid #ddd;
}
.grip{
	flex:none;
	width:3px;
	height:28px;
	margin:0 5px 0 4px;
	border-left:3px dotted #b4b4b4;
}
.mini{
	fill:#222;
	font:bold 8px "Liberation Sans",sans-serif;
}
.red{
	fill:#c8342c;
	font-size:10px;
}
.letter{
	fill:#444;
	font:bold 24px "Liberation Serif",serif;
}
.search{
	display:flex;
	flex:none;
	align-items:center;
	width:188px;
	height:27px;
	margin:0 4px;
	padding:0 4px 0 1px;
	border:1px solid #999;
	background:#fff;
}
.search input{
	flex:1;
	min-width:0;
	padding:0;
	border:0;
	outline:0;
	background:none;
	color:inherit;
	font:inherit;
}
.search svg{
	flex:none;
	width:16px;
	height:16px;
	stroke:#555;
}

/* 选择条 */
.pick{
	height:37px;
	border-bottom:0;
}
.pick .tool{
	width:23px;
	height:24px;
}
.pick .tool > svg{
	width:17px;
	height:17px;
}
.pick .drop{
	width:14px;
}
.combo{
	position:relative;
	flex:none;
	height:27px;
	margin-right:3px;
}
.combo select{
	width:100%;
	height:27px;
	padding:0 2px;
	border:1px solid #999;
	border-radius:0;
	outline:0;
	background:#fff;
	color:inherit;
	font:inherit;
	appearance:none;
}
.combo:after{
	position:absolute;
	top:11px;
	right:7px;
	border:6px solid transparent;
	border-top-color:#111;
	border-bottom:0;
	content:"";
	pointer-events:none;
}
.filter{
	width:182px;
	margin:0 7px 0 -6px;
}
.scope{
	width:213px;
}
.all{
	width:81px;
	margin-left:4px;
	margin-right:5px;
}
.combo.side{
	width:169px;
	margin-left:5px;
	margin-right:5px;
}

/* 工作区 */
.work{
	display:flex;
	flex:1;
	min-height:0;
}
.work .side{
	display:flex;
	flex:none;
	flex-direction:column;
	width:20px;
	overflow:hidden;
	border-right:2px solid #c6c6c6;
}
.side button{
	height:31px;
}
.side button svg{
	display:block;
	width:8px;
	height:24px;
}
.side .drop{
	width:18px;
	height:33px;
}
.side .more{
	margin-top:auto;
}
.side .more svg{
	width:10px;
	height:14px;
	margin-left:4px;
}
.side .last{
	height:20px;
}
.hgrip{
	flex:none;
	width:14px;
	height:2px;
	margin:2px 0 1px;
	border-top:2px dotted #aaa;
}
.view{
	flex:1;
	min-width:0;
	background:#d5d5d5;
}
.view svg{
	display:block;
	width:100%;
	height:100%;
}
.axis{
	fill:#e4d2b8;
	font:11px "Liberation Sans",sans-serif;
}
.mark{
	opacity:.92;
}
.brand, .url{
	fill:#559fa4;
	stroke:#f3ead8;
	stroke-width:4px;
	stroke-linejoin:round;
	paint-order:stroke;
}
.brand{
	font:bold 47px "Noto Sans CJK SC",sans-serif;
}
.url{
	font:bold 18px "DejaVu Sans",sans-serif;
}
```
